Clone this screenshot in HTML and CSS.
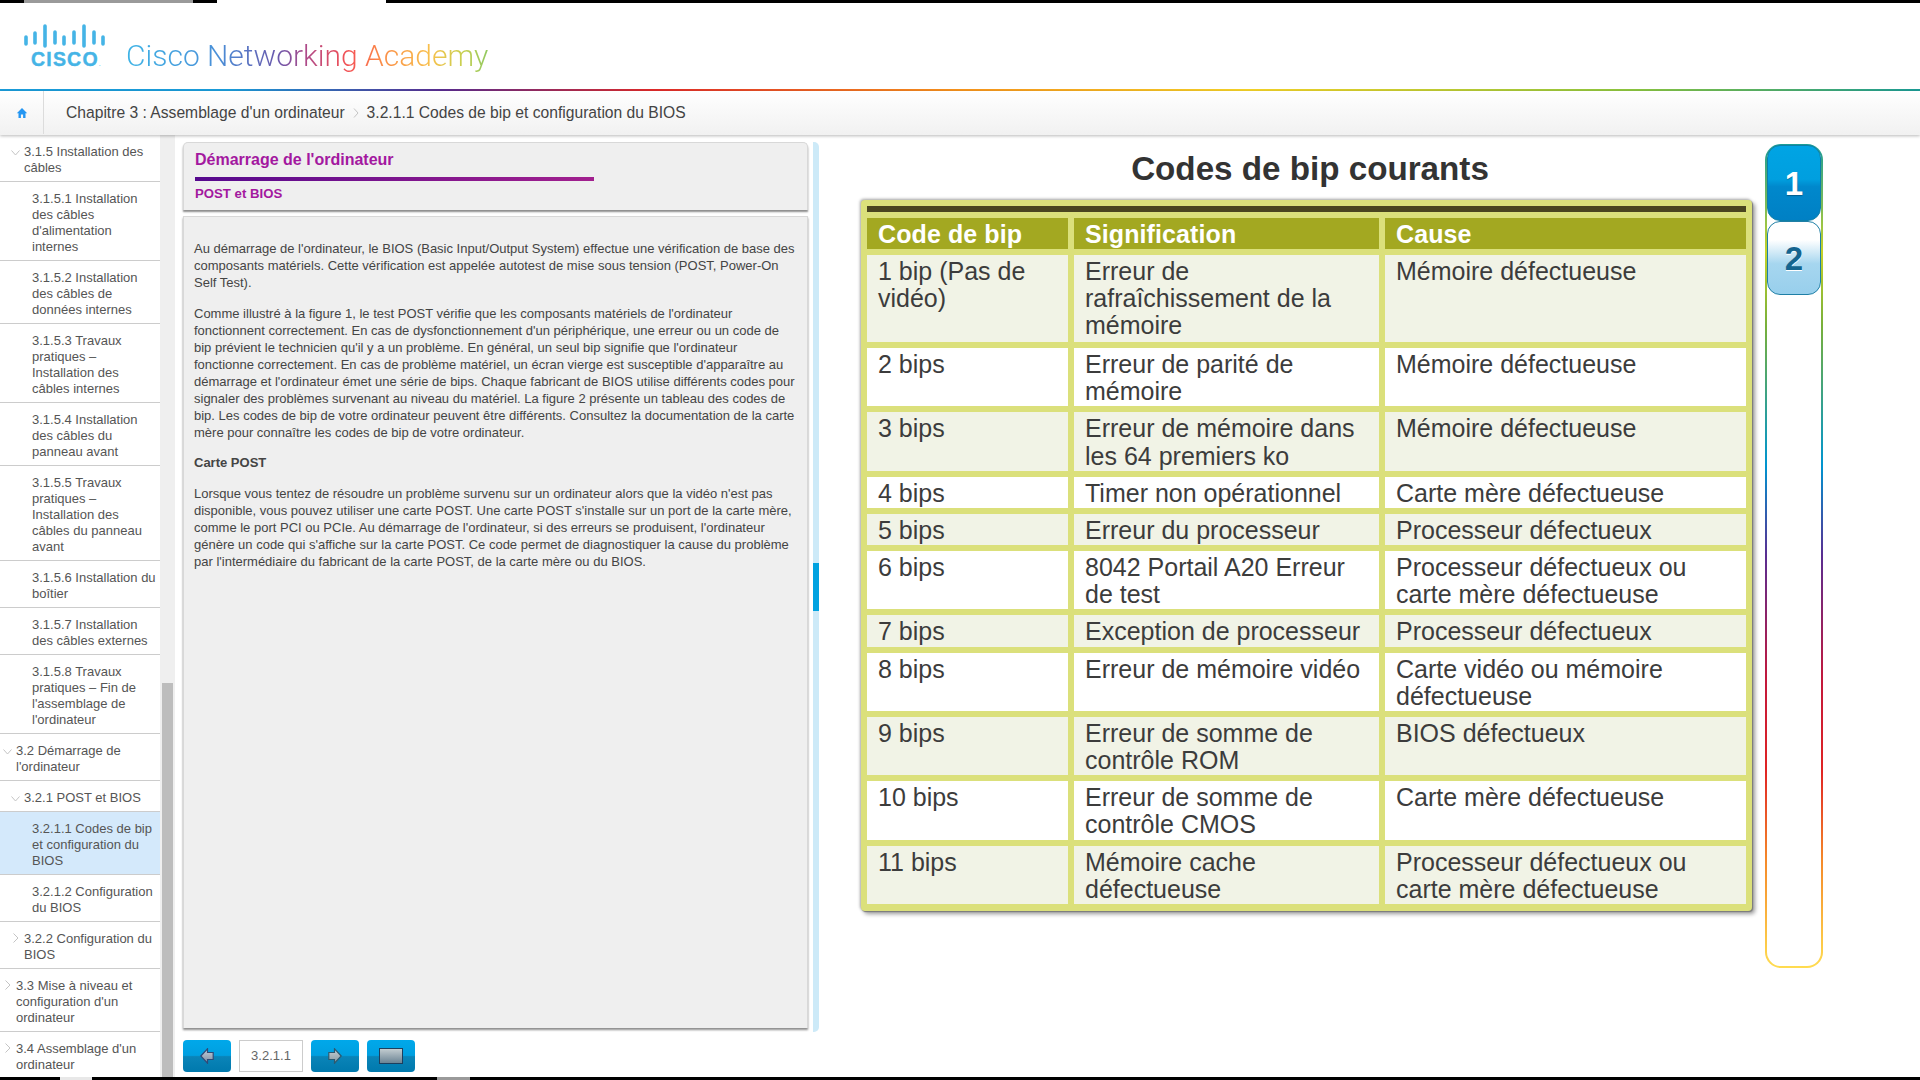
FILE: index.html
```html
<!DOCTYPE html>
<html lang="fr">
<head>
<meta charset="utf-8">
<title>Codes de bip et configuration du BIOS</title>
<link rel="stylesheet" href="styles.css">
</head>
<body>
<div class="app">
  <div class="edge edge-top"><span class="seg seg-a"></span><span class="seg seg-b"></span></div>
  <header class="brand">
    <div class="logo">
      <svg class="logo-bars" width="84" height="24" viewBox="0 0 84 24" fill="none" stroke="#45b4e6" stroke-width="3.6" stroke-linecap="round">
        <path d="M2 13v7M11 9v10M21 2v20M31 8v11M40 13v7M50 8v11M60 2v20M70 8v11M79 13v7"/>
      </svg>
      <div class="logo-word">CISCO<span class="logo-dot">.</span></div>
    </div>
    <div class="academy">Cisco Networking Academy</div>
  </header>
  <div class="rule"></div>
  <nav class="crumbs">
    <div class="home">
      <svg width="12" height="12" viewBox="0 0 12 12"><path d="M6 1 .8 6.2h1.7V11h2.4V7.6h2.2V11h2.4V6.2h1.7z" fill="#2496f2"/></svg>
    </div>
    <div class="trail">
      <span>Chapitre 3 : Assemblage d'un ordinateur</span>
      <svg class="trail-sep" width="6" height="12" viewBox="0 0 6 12" fill="none" stroke="#c4c4c4" stroke-width="1"><path d="M1 1.5 5 6l-4 4.5"/></svg>
      <span>3.2.1.1 Codes de bip et configuration du BIOS</span>
    </div>
  </nav>
  <main class="main">
    <aside class="toc">
      <ul class="toc-list">
        <li class="toc-row lv2"><svg class="chev" width="9" height="6" viewBox="0 0 9 6"><path d="M.5.5 4.5 5l4-4.5"/></svg><span>3.1.5 Installation des câbles</span></li>
        <li class="toc-row lv3"><span>3.1.5.1 Installation des câbles d'alimentation internes</span></li>
        <li class="toc-row lv3"><span>3.1.5.2 Installation des câbles de données internes</span></li>
        <li class="toc-row lv3"><span>3.1.5.3 Travaux pratiques – Installation des câbles internes</span></li>
        <li class="toc-row lv3"><span>3.1.5.4 Installation des câbles du panneau avant</span></li>
        <li class="toc-row lv3"><span>3.1.5.5 Travaux pratiques – Installation des câbles du panneau avant</span></li>
        <li class="toc-row lv3"><span>3.1.5.6 Installation du boîtier</span></li>
        <li class="toc-row lv3"><span>3.1.5.7 Installation des câbles externes</span></li>
        <li class="toc-row lv3"><span>3.1.5.8 Travaux pratiques – Fin de l'assemblage de l'ordinateur</span></li>
        <li class="toc-row lv1"><svg class="chev" width="9" height="6" viewBox="0 0 9 6"><path d="M.5.5 4.5 5l4-4.5"/></svg><span>3.2 Démarrage de l'ordinateur</span></li>
        <li class="toc-row lv2"><svg class="chev" width="9" height="6" viewBox="0 0 9 6"><path d="M.5.5 4.5 5l4-4.5"/></svg><span>3.2.1 POST et BIOS</span></li>
        <li class="toc-row lv3 current"><span>3.2.1.1 Codes de bip et configuration du BIOS</span></li>
        <li class="toc-row lv3"><span>3.2.1.2 Configuration du BIOS</span></li>
        <li class="toc-row lv2"><svg class="chev chev-r" width="9" height="10" viewBox="0 0 9 10"><path d="M2.5.5 7 5 2.500 9.500"/></svg><span>3.2.2 Configuration du BIOS</span></li>
        <li class="toc-row lv1"><svg class="chev chev-r" width="9" height="10" viewBox="0 0 9 10"><path d="M2.5.5 7 5 2.500 9.500"/></svg><span>3.3 Mise à niveau et configuration d'un ordinateur</span></li>
        <li class="toc-row lv1"><svg class="chev chev-r" width="9" height="10" viewBox="0 0 9 10"><path d="M2.5.5 7 5 2.500 9.500"/></svg><span>3.4 Assemblage d'un ordinateur</span></li>
      </ul>
    </aside>
    <div class="toc-scroll"><div class="toc-thumb"></div></div>
    <section class="lesson">
      <div class="card lesson-head">
        <h1 class="lesson-title">Démarrage de l'ordinateur</h1>
        <div class="lesson-line"></div>
        <h2 class="lesson-sub">POST et BIOS</h2>
      </div>
      <article class="card lesson-body">
        <p>Au démarrage de l'ordinateur, le BIOS (Basic Input/Output System) effectue une vérification de base des composants matériels. Cette vérification est appelée autotest de mise sous tension (POST, Power-On Self Test).</p>
        <p>Comme illustré à la figure 1, le test POST vérifie que les composants matériels de l'ordinateur fonctionnent correctement. En cas de dysfonctionnement d'un périphérique, une erreur ou un code de bip prévient le technicien qu'il y a un problème. En général, un seul bip signifie que l'ordinateur fonctionne correctement. En cas de problème matériel, un écran vierge est susceptible d'apparaître au démarrage et l'ordinateur émet une série de bips. Chaque fabricant de BIOS utilise différents codes pour signaler des problèmes survenant au niveau du matériel. La figure 2 présente un tableau des codes de bip. Les codes de bip de votre ordinateur peuvent être différents. Consultez la documentation de la carte mère pour connaître les codes de bip de votre ordinateur.</p>
        <p><strong>Carte POST</strong></p>
        <p>Lorsque vous tentez de résoudre un problème survenu sur un ordinateur alors que la vidéo n'est pas disponible, vous pouvez utiliser une carte POST. Une carte POST s'installe sur un port de la carte mère, comme le port PCI ou PCIe. Au démarrage de l'ordinateur, si des erreurs se produisent, l'ordinateur génère un code qui s'affiche sur la carte POST. Ce code permet de diagnostiquer la cause du problème par l'intermédiaire du fabricant de la carte POST, de la carte mère ou du BIOS.</p>
      </article>
      <div class="pager">
        <button class="nav-btn" aria-label="Précédent">
          <svg width="14" height="16" viewBox="0 0 14 16"><defs><linearGradient id="ag" x1="0" y1="0" x2="0" y2="1"><stop offset="0" stop-color="#c5d0dc"/><stop offset="1" stop-color="#7d8ba0"/></linearGradient></defs><path d="M.8 8 7.500.8v3.700h5.700v7H7.500v3.700z" fill="url(#ag)" stroke="#2f4a78" stroke-width="1.200"/></svg>
        </button>
        <div class="page-no">3.2.1.1</div>
        <button class="nav-btn" aria-label="Suivant">
          <svg width="14" height="16" viewBox="0 0 14 16"><defs><linearGradient id="ah" x1="0" y1="0" x2="0" y2="1"><stop offset="0" stop-color="#c8d2d8"/><stop offset="1" stop-color="#84969e"/></linearGradient></defs><path d="M13.200 8 6.500.8v3.700H.8v7h5.700v3.700z" fill="url(#ah)" stroke="#2c5a70" stroke-width="1.200"/></svg>
        </button>
        <button class="nav-btn" aria-label="Plein écran"><span class="screen"></span></button>
      </div>
    </section>
    <div class="lesson-scroll"><div class="lesson-thumb"></div></div>
    <section class="media">
      <div class="figure">
        <h2 class="figure-title">Codes de bip courants</h2>
        <div class="sheet">
          <div class="sheet-bar"></div>
          <table class="beeps">
            <colgroup><col class="c1"><col class="c2"><col class="c3"></colgroup>
            <thead><tr><th>Code de bip</th><th>Signification</th><th>Cause</th></tr></thead>
            <tbody>
              <tr class="tall"><td>1 bip (Pas de vidéo)</td><td>Erreur de rafraîchissement de la mémoire</td><td>Mémoire défectueuse</td></tr>
              <tr><td>2 bips</td><td>Erreur de parité de mémoire</td><td>Mémoire défectueuse</td></tr>
              <tr><td>3 bips</td><td>Erreur de mémoire dans les 64 premiers ko</td><td>Mémoire défectueuse</td></tr>
              <tr><td>4 bips</td><td>Timer non opérationnel</td><td>Carte mère défectueuse</td></tr>
              <tr><td>5 bips</td><td>Erreur du processeur</td><td>Processeur défectueux</td></tr>
              <tr><td>6 bips</td><td>8042 Portail A20 Erreur de test</td><td>Processeur défectueux ou carte mère défectueuse</td></tr>
              <tr><td>7 bips</td><td>Exception de processeur</td><td>Processeur défectueux</td></tr>
              <tr><td>8 bips</td><td>Erreur de mémoire vidéo</td><td>Carte vidéo ou mémoire défectueuse</td></tr>
              <tr><td>9 bips</td><td>Erreur de somme de contrôle ROM</td><td>BIOS défectueux</td></tr>
              <tr><td>10 bips</td><td>Erreur de somme de contrôle CMOS</td><td>Carte mère défectueuse</td></tr>
              <tr><td>11 bips</td><td>Mémoire cache défectueuse</td><td>Processeur défectueux ou carte mère défectueuse</td></tr>
            </tbody>
          </table>
        </div>
      </div>
      <div class="tabs">
        <button class="tab tab-on">1</button>
        <button class="tab tab-off">2</button>
      </div>
    </section>
  </main>
  <div class="edge edge-bottom"><span class="seg seg-c"></span><span class="seg seg-d"></span></div>
</div>
</body>
</html>
```
FILE: styles.css
```css
* { box-sizing: border-box; }
html, body { margin: 0; padding: 0; height: 100%; overflow: hidden; background: #fff; }
body { font-family: "Liberation Sans", Arial, sans-serif; color: #444; }
.app { width: 1920px; height: 1080px; display: flex; flex-direction: column; overflow: hidden; }

.edge { background: #000; display: flex; flex: none; height: 3px; }
.seg { display: block; height: 100%; }
.edge-top { height: 3px; }
.seg-a { width: 169px; margin-left: 24px; background: #9a9a9a; }
.seg-b { width: 169px; margin-left: 24px; background: #fff; }
.seg-c { width: 32px; margin-left: 60px; background: #e8e8e8; }
.seg-d { width: 33px; margin-left: 345px; background: #9a9a9a; }

.brand { height: 86px; flex: none; display: flex; padding: 21px 0 0 24px; }
.logo { width: 102px; flex: none; }
.logo-bars { display: block; margin-left: 0; }
.logo-word { font-weight: 700; font-size: 19.5px; line-height: 18px; letter-spacing: 1.2px; color: #45b4e6; -webkit-text-stroke: .4px #45b4e6; margin: 2px 0 0 7px; white-space: nowrap; }
.logo-dot { font-size: 7px; font-weight: 400; letter-spacing: 0; -webkit-text-stroke: 0; }
.academy {
  font-family: Roboto, "Liberation Sans", sans-serif; font-weight: 300; font-size: 30px; line-height: 36px;
  margin-top: 14px; white-space: nowrap; height: 42px;
  background: linear-gradient(90deg, #3fb4e6 0, #4a90d8 25%, #6a58ac 42%, #b04a88 50%, #ee5058 60%, #f85c50 64%, #fa8a48 70%, #f8c04c 84%, #c8d050 93%, #90c860 100%);
  -webkit-background-clip: text; background-clip: text; color: transparent;
}

.rule { height: 2px; flex: none; background: linear-gradient(90deg, #1b9ddb 0, #1b9ddb 12%, #5a2d91 23%, #e02a2a 34%, #f7941d 50%, #f5d328 65%, #8cc63f 85%, #1b9c96 100%); }

.crumbs { height: 44px; padding-bottom: 1px; flex: none; display: flex; background: linear-gradient(#fff, #f1f1f1); box-shadow: 0 1px 3px rgba(0,0,0,.28); position: relative; z-index: 2; }
.home { width: 44px; border-right: 1px solid #dcdcdc; display: flex; align-items: center; justify-content: center; }
.trail { display: flex; align-items: center; gap: 8px; padding-left: 22px; font-size: 15.65px; color: #444; white-space: nowrap; }

.main { flex: 1; min-height: 0; display: flex; }

.toc { width: 160px; flex: none; overflow: hidden; background: #fff; }
.toc-list { list-style: none; margin: 0; padding: 0; }
.toc-row { display: flex; align-items: flex-start; padding: 9px 3px 5px 0; border-bottom: 1px solid #ccc; font-size: 13px; line-height: 16px; color: #555; }
.toc-row.lv1 { padding-left: 3px; }
.toc-row.lv2 { padding-left: 11px; }
.toc-row.lv3 { padding-left: 32px; }
.toc-row.current { background: #d4e9fb; }
.chev { flex: none; margin: 6px 4px 0 0; fill: none; stroke: #c4c4c4; stroke-width: 1; }
.chev-r { margin-top: 2px; }

.toc-scroll { width: 15px; flex: none; background: #efefef; padding-left: 2px; padding-right: 2px; display: flex; align-items: flex-end; }
.toc-thumb { width: 100%; height: 394px; background: #bdbdbd; }

.lesson { width: 625px; flex: none; margin-left: 8px; padding-top: 7px; display: flex; flex-direction: column; }
.card { background: #efefef; border: 1px solid #d8d8d8; }
.lesson-head { height: 68px; border-radius: 5px 5px 0 0; padding: 7px 11px 0; border-bottom: 0; box-shadow: 0 2px 2px rgba(0,0,0,.45); }
.lesson-title { margin: 0; font-size: 16px; line-height: 20px; font-weight: 700; color: #a3189f; }
.lesson-line { width: 399px; height: 4px; margin-top: 7px; background: linear-gradient(90deg, #56098e, #a2208e); }
.lesson-sub { margin: 5px 0 0; font-size: 13.2px; line-height: 16px; font-weight: 700; color: #a3189f; }
.lesson-body { margin-top: 6px; height: 812px; padding: 23px 11px 0 10px; border-bottom: 0; box-shadow: 0 2px 2px rgba(0,0,0,.45); font-size: 13px; line-height: 17px; color: #444; }
.lesson-body p { margin: 0 0 13.500px; }

.pager { display: flex; gap: 8px; margin-top: 12px; height: 32px; }
.nav-btn { width: 48px; height: 32px; padding: 0; border: 0; border-radius: 4px; background: linear-gradient(#00a8ea 0, #009fe0 48%, #0a84b8 52%, #0079ad 100%); display: flex; align-items: center; justify-content: center; }
.page-no { width: 64px; height: 32px; background: #fff; border: 1px solid #ccc; text-align: center; font-size: 13px; line-height: 30px; color: #666; }
.screen { display: block; width: 24px; height: 16px; border: 1px solid #1d3f5e; background: linear-gradient(#c2ccd0, #6c8494); }

.lesson-scroll { width: 6px; height: 890px; flex: none; margin: 7px 0 0 5px; background: #cdeaf8; border-radius: 0 5px 5px 0; padding-top: 421px; }
.lesson-thumb { height: 48px; background: #00a2e0; }

.media { flex: 1; display: flex; align-items: flex-start; padding-left: 42px; }
.figure { width: 891px; flex: none; }
.figure-title { margin: 14px 0 0; padding-left: 7px; text-align: center; font-size: 33.2px; line-height: 39px; font-weight: 700; color: #333; }
.sheet { margin-top: 12px; height: 711px; background: #dbe07b; border-radius: 4px; box-shadow: 1px 1px 1px #7a7a7a, 3px 3px 4px rgba(0,0,0,.4), -1px -1px 3px rgba(0,0,0,.35); }
.sheet-bar { height: 6px; margin: 0 6px; position: relative; top: 6px; background: #4a4520; }
.beeps { width: 891px; margin-top: 6px; table-layout: fixed; border-collapse: separate; border-spacing: 6px; font-size: 25px; line-height: 27.15px; color: #3c3c3c; }
.beeps col.c1 { width: 201px; }
.beeps col.c2 { width: 305px; }
.beeps col.c3 { width: 361px; }
.beeps th { background: #a3a821; color: #fff; font-weight: 700; text-align: left; padding: 3px 11px 1px; letter-spacing: .1px; }
.beeps td { vertical-align: top; padding: 3px 11px 1px; background: #fff; }
.beeps tbody tr:nth-child(odd) td { background: #f1f3e6; }
.beeps tr.tall td { height: 87px; }

.tabs { width: 58px; height: 824px; flex: none; margin: 9px 0 0 13px; border: 2px solid transparent; border-radius: 16px; display: flex; flex-direction: column; align-items: center;
  background: linear-gradient(#fff, #fff) padding-box, linear-gradient(#1b9c96 0, #c4d22a 13%, #79b03a 22%, #0095d0 39%, #5a2d91 50%, #c3183c 65%, #e02424 76%, #f58a2a 87%, #ffdc50 100%) border-box; }
.tab { width: 54px; flex: none; padding: 2px 0 0; font-family: "Liberation Sans", Arial, sans-serif; font-size: 33px; font-weight: 700; border-radius: 13px; }
.tab-on { height: 76px; margin-top: -1px; border: 1px solid #0e7fa8; color: #fff; background: linear-gradient(#00a4e4 0, #009fdf 45%, #0088cc 55%, #0080c4 100%); text-shadow: 0 1px 1px rgba(0,0,0,.3); }
.tab-off { height: 74px; border: 1px solid #1f7fa6; color: #14648f; background: linear-gradient(#fff 0, #fff 25%, #a6d6ef 58%, #98cfec 100%); text-shadow: 0 1px 0 #fff; }
```
